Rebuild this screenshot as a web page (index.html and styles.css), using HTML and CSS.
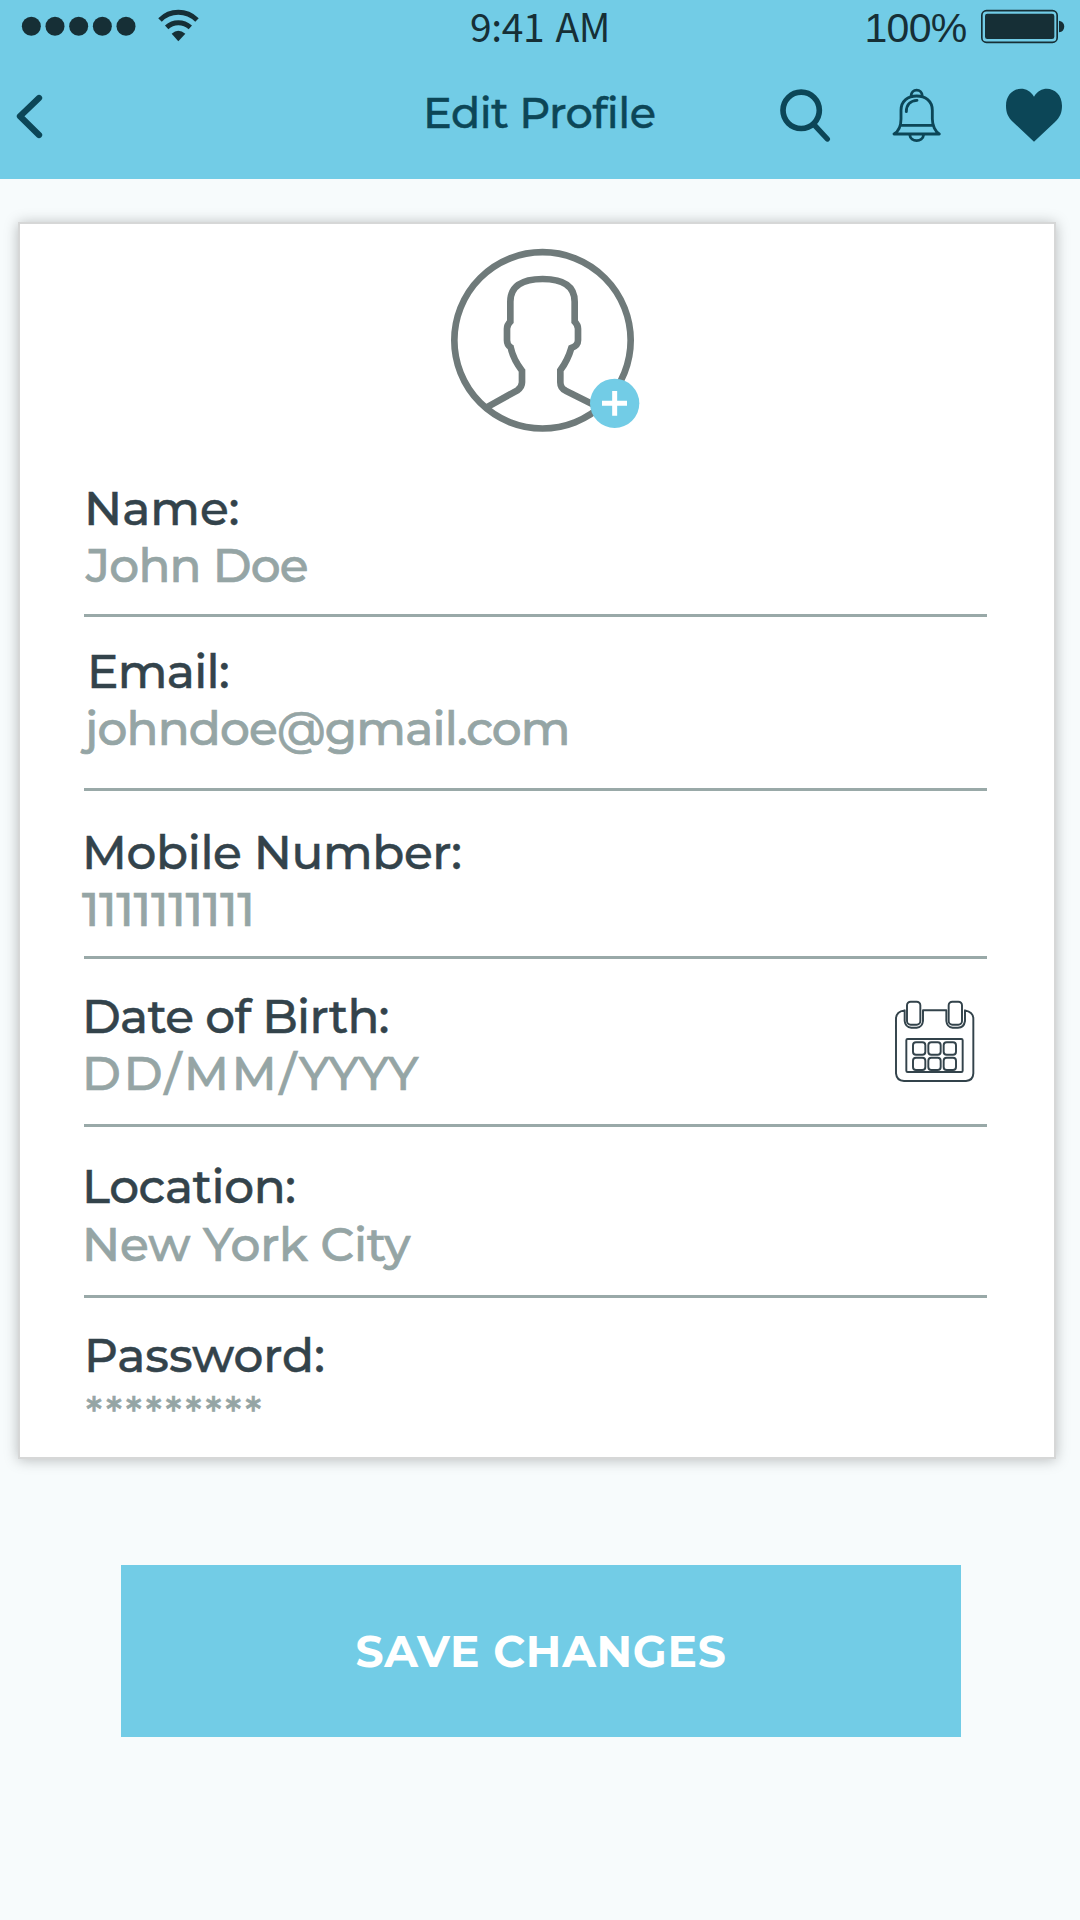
FILE: index.html
```html
<!DOCTYPE html>
<html lang="en">
<head>
<meta charset="utf-8">
<title>Edit Profile</title>
<link rel="stylesheet" href="styles.css">
</head>
<body>
<header class="header">
  <div class="status">
    <svg class="status-signal" viewBox="60 24 546 105" aria-hidden="true">
      <circle cx="94" cy="79" r="28.5"/><circle cx="165" cy="79" r="28.5"/><circle cx="236" cy="79" r="28.5"/><circle cx="307" cy="79" r="28.5"/><circle cx="378" cy="79" r="28.5"/>
      <path class="wifi-arc" d="M480 60Q503 37 535 37T591 60M500 82Q515 68 535 68T571 82"/>
      <path d="M515 101Q525 92 535 92T556 101L535 124Z"/>
    </svg>
    <span class="status-time">9:41 AM</span>
    <span class="status-percent">100%</span>
    <svg class="status-battery" viewBox="720 24 258 108" aria-hidden="true">
      <rect class="battery-shell" x="725.5" y="32" width="226" height="95" rx="14"/>
      <rect x="735" y="41" width="208" height="76" rx="7"/>
      <path d="M957 62C978 64 978 95 957 97Z"/>
    </svg>
  </div>
  <nav class="nav">
    <svg class="nav-back" viewBox="45 279 90 141" aria-label="Back"><path d="M117 294L60 349L117 405"/></svg>
    <h1 class="nav-title">Edit Profile</h1>
    <svg class="nav-search" viewBox="114 261 162 171" aria-label="Search"><circle cx="183.5" cy="331" r="54.5"/><path d="M222 374L262 417"/></svg>
    <svg class="nav-bell" viewBox="453 261 156 171" aria-label="Notifications">
      <path d="M513 289C513 264 547 264 547 289M462 402H598C586 395 577 377 577 357V331C577 303 556 288 530 288S483 303 483 331V357C483 378 474 395 462 402ZM481 376H579M509 404C512 428 548 428 551 404"/>
      <path d="M499 335C499 313 513 302 531 301"/>
    </svg>
    <svg class="nav-heart" viewBox="792 261 180 171" aria-label="Favourites"><path d="M882 425L819 366C804 351 798 338 798 317C798 264 858 248 882 290C906 248 966 264 966 317C966 338 960 351 945 366Z"/></svg>
  </nav>
</header>

<main class="main">
  <section class="card">
    <svg class="avatar" viewBox="0 0 690 660" aria-label="Change photo">
      <g class="avatar-line">
        <circle cx="337.500" cy="331" r="264.500"/>
        <path d="M170 532L262 481Q276 472 276 457V422C259 400 247 376 242 352C233 347 231 340 231 331V296C231 286 234 282 241 275V215C241 171 273 147 338 147S434 171 434 215V275C441 282 444 289 444 296V331C444 342 436 350 424 354C417 378 406 401 391 421V457Q391 475 407 482L497 527"/>
      </g>
      <circle class="badge" cx="554" cy="520" r="74"/>
      <path class="plus" d="M554 483V557M516 520H591"/>
    </svg>

    <div class="field name">
      <div class="label">Name:</div>
      <div class="value">John Doe</div>
    </div>
    <div class="field email">
      <div class="label">Email:</div>
      <div class="value">johndoe@gmail.com</div>
    </div>
    <div class="field mobile">
      <div class="label">Mobile Number:</div>
      <div class="value">1111111111</div>
    </div>
    <div class="field birth">
      <div>
        <div class="label">Date of Birth:</div>
        <div class="value">DD/MM/<span class="year">YYYY</span></div>
      </div>
      <svg class="calendar" viewBox="96 84 255 261" aria-label="Pick a date">
        <path d="M134 121Q108 125 108 146V310Q110 332 132 333H318Q339 331 340 310V146Q340 126 315 121V153Q312 173 294 173H278Q261 172 259 153V121H189V153Q187 172 170 173H154Q136 172 134 153Z"/>
        <rect x="141" y="95" width="40" height="69" rx="11"/><rect x="266" y="95" width="40" height="69" rx="11"/>
        <rect x="139" y="207" width="169" height="99" rx="4"/>
        <rect x="159" y="217" width="37" height="37" rx="9"/><rect x="205" y="217" width="37" height="37" rx="9"/><rect x="251" y="217" width="37" height="37" rx="9"/>
        <rect x="159" y="263" width="37" height="37" rx="9"/><rect x="205" y="263" width="37" height="37" rx="9"/><rect x="251" y="263" width="37" height="37" rx="9"/>
      </svg>
    </div>
    <div class="field location">
      <div class="label">Location:</div>
      <div class="value">New York City</div>
    </div>
    <div class="field password">
      <div class="label">Password:</div>
      <div class="value">*********</div>
    </div>
  </section>
  <button class="save" type="button">SAVE CHANGES</button>
</main>
</body>
</html>
```
FILE: styles.css
```css
* { box-sizing: border-box; }

body {
  margin: 0;
  min-height: 1920px;
  background: #f7fbfc;
  font-family: Montserrat, Inter, sans-serif;
}

svg { display: block; }

/* Header */
.header {
  height: 179px;
  background: #72cce6;
  color: #0c4657;
}

.status {
  display: grid;
  grid-template-columns: 450px 394.500px 115.500px 86px;
  height: 56px;
  padding-left: 20px;
  color: #162f36;
  fill: #162f36;
}

.status-signal { width: 182px; height: 35px; margin-top: 8px; }
.wifi-arc { fill: none; stroke: #162f36; stroke-width: 15; }

.status-time {
  font: 400 39px/50px "Noto Sans CJK SC", "Noto Sans", sans-serif;
  letter-spacing: -0.400px;
  word-spacing: 3px;
}

.status-percent {
  font: 400 41px/56px "Liberation Sans", Arial, sans-serif;
  letter-spacing: -0.700px;
}

.status-battery { width: 86px; height: 36px; margin-top: 8px; }
.battery-shell { fill: none; stroke: #162f36; stroke-width: 5; }

.nav {
  display: flex;
  align-items: flex-start;
  padding: 31px 0 0 15px;
  stroke: #0c4657;
  stroke-linecap: round;
  stroke-linejoin: round;
  fill: none;
}

.nav-back { width: 30px; height: 47px; margin-top: 6px; stroke-width: 19; }

.nav-title {
  width: 355px;
  margin: 0 0 0 378px;
  font-size: 43px;
  font-weight: 500;
  line-height: 52px;
  letter-spacing: -0.570px;
  -webkit-text-stroke: 0.400px #0c4657;
}

.nav-search { width: 54px; height: 57px; stroke-width: 17; }
.nav-search path { stroke-width: 16; }
.nav-bell { width: 52px; height: 57px; margin-left: 59px; stroke-width: 8.500; }
.nav-heart { width: 60px; height: 57px; margin-left: 61px; fill: #0c4657; stroke: none; }

/* Profile card */
.main {
  display: flex;
  flex-direction: column;
  align-items: flex-start;
  padding-top: 43px;
}

.card {
  width: 1038px;
  height: 1237px;
  margin-left: 18px;
  padding: 6px 67px 0 64px;
  border: 2px solid #d6d7d7;
  background: #fff;
  box-shadow: 0 1px 13px rgba(0, 0, 0, 0.260);
}

.avatar { width: 230px; height: 220px; margin: 0 0 30px 346px; }
.avatar-line { fill: none; stroke: #6f7a7a; stroke-width: 20; }
.badge { fill: #72cce6; }
.plus { stroke: #fff; stroke-width: 15; }

.field {
  width: 903px;
  border-bottom: 3px solid #99a9a8;
  font-size: 47px;
  font-weight: 500;
  line-height: 57px;
}

.label { color: #33434b; -webkit-text-stroke: 0.500px #33434b; }
.value { color: #95a5a5; -webkit-text-stroke: 0.700px #95a5a5; }

.name { padding-bottom: 20px; }
.name .value { padding-left: 2px; letter-spacing: -0.780px; }

.email { padding: 26px 0 31px; }
.email .label { padding-left: 3px; letter-spacing: -0.700px; }
.email .value { padding-left: 1px; letter-spacing: -0.840px; }

.mobile { padding: 33px 0 18px; }
.mobile .label { margin-left: -2px; letter-spacing: -0.380px; }
.mobile .value { margin-left: -2px; letter-spacing: -0.100px; }

.birth {
  display: flex;
  justify-content: space-between;
  align-items: flex-start;
  padding: 29px 10px 22px 0;
}
.birth .label { margin-left: -2px; letter-spacing: -0.720px; }
.birth .value { margin-left: -2px; letter-spacing: 2.900px; }
.birth .year { letter-spacing: -2.900px; }

.calendar {
  width: 85px;
  height: 87px;
  margin-top: 10px;
  fill: none;
  stroke: #33434b;
  stroke-width: 5.800;
  stroke-linejoin: round;
}

.location { padding: 31px 0 22px; }
.location .label { margin-left: -2px; letter-spacing: -0.450px; }
.location .value { margin: 1px 0 0 -2px; letter-spacing: -0.090px; }

.password { padding-top: 29px; border-bottom: 0; }
.password .value {
  padding-left: 2px;
  font-size: 40px;
  letter-spacing: 3.100px;
}

/* Submit button */
.save {
  width: 840px;
  height: 172px;
  margin: 106px 0 0 121px;
  padding: 0;
  border: 0;
  background: #72cce6;
  color: #fff;
  font: 700 44px/1.2 Montserrat, Inter, sans-serif;
  letter-spacing: 0.710px;
}
```
